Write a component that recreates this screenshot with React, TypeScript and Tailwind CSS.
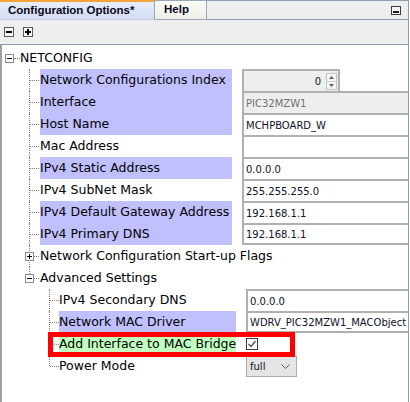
import React from "react";

const LF = "font-['DejaVu_Sans',sans-serif] text-[12.5px] text-black whitespace-nowrap";
const VF = "font-['DejaVu_Sans',sans-serif] text-[10px] text-[#101028] whitespace-nowrap";
const PURPLE = "bg-[#c0c0ff]";
const DOT = "border-dotted border-[#808080]";

function Expander({ open }: { open: boolean }) {
  return (
    <div className="relative w-[9px] h-[9px] border border-[#8c8c8c] bg-white">
      <div className="absolute left-[1px] top-[3px] w-[5px] h-px bg-black" />
      {!open && <div className="absolute left-[3px] top-[1px] w-px h-[5px] bg-black" />}
    </div>
  );
}

function L1Row({
  label,
  bg = "",
  last = false,
  children,
}: {
  label: string;
  bg?: string;
  last?: boolean;
  children?: React.ReactNode;
}) {
  return (
    <div className="relative h-[22px] flex">
      <div className={`absolute left-[27px] top-0 ${last ? "h-[11px]" : "h-[22px]"} border-l ${DOT}`} />
      <div className={`absolute left-[28px] top-[11px] w-[9px] border-t ${DOT}`} />
      <div className="w-[38px] shrink-0" />
      <div className={`w-[192px] shrink-0 flex items-center ${bg} ${LF}`}>{label}</div>
      <div className="w-[10px] shrink-0" />
      <div className="flex-1 flex">{children}</div>
    </div>
  );
}

function L2Row({
  label,
  bg = "",
  last = false,
  children,
}: {
  label: string;
  bg?: string;
  last?: boolean;
  children?: React.ReactNode;
}) {
  return (
    <div className="relative h-[22px] flex">
      <div className={`absolute left-[47px] top-0 ${last ? "h-[11px]" : "h-[22px]"} border-l ${DOT}`} />
      <div className={`absolute left-[48px] top-[11px] w-[9px] border-t ${DOT}`} />
      <div className="w-[57px] shrink-0" />
      <div className={`w-[177px] shrink-0 flex items-center ${bg} ${LF}`}>{label}</div>
      <div className="w-[10px] shrink-0" />
      <div className="flex-1 flex items-center">{children}</div>
    </div>
  );
}

function FolderRow({ label, open, last = false }: { label: string; open: boolean; last?: boolean }) {
  return (
    <div className="relative h-[22px] flex">
      <div className={`absolute left-[27px] top-0 ${last ? "h-[11px]" : "h-[22px]"} border-l ${DOT}`} />
      <div className="absolute left-[23px] top-[7px]">
        <Expander open={open} />
      </div>
      <div className={`absolute left-[32px] top-[11px] w-[5px] border-t ${DOT}`} />
      <div className="w-[38px] shrink-0" />
      <div className={`flex items-center ${LF}`}>{label}</div>
    </div>
  );
}

function Cell({
  children,
  bg = "bg-white",
  bottom = false,
  color = "",
}: {
  children?: React.ReactNode;
  bg?: string;
  bottom?: boolean;
  color?: string;
}) {
  return (
    <div
      className={`flex-1 h-full border-l-2 border-t-2 ${bottom ? "border-b-2" : ""} border-[#b0b0b0] flex items-center pl-[2px] ${bg} ${VF} ${color}`}
    >
      {children}
    </div>
  );
}

function ToolIcon({ plus }: { plus: boolean }) {
  return (
    <div className="relative w-[10px] h-[10px] border border-[#5a5a5a] bg-[#f6f6f6]">
      <div className="absolute left-[1px] top-[3px] w-[6px] h-[2px] bg-black" />
      {plus && <div className="absolute left-[3px] top-[1px] w-[2px] h-[6px] bg-black" />}
    </div>
  );
}

export default function App() {
  return (
    <div className="relative w-[410px] h-[402px] bg-white overflow-hidden">
      <div className="w-[409px] h-full flex flex-col border-r border-[#8d9cb4]">
        {/* Tab strip */}
        <div className="flex h-[20px] shrink-0 font-['Liberation_Sans',sans-serif] font-bold text-[11.5px] text-[#0a0a20]">
          <div className="w-[155px] h-full bg-linear-to-b from-[#e8edf9] to-[#d2dcf2] border-t-2 border-t-[#f4a43a] border-r border-r-[#9aa6bb] border-b border-b-[#c3cddf] flex items-center pl-[8px]">
            Configuration Options*
          </div>
          <div className="w-[52px] h-full bg-linear-to-b from-[#fbfbf8] to-[#efeee8] border-t border-r border-b border-[#9aa6bb] flex items-center pl-[9px]">
            Help
          </div>
          <div className="flex-1 h-full bg-[#eeeeee] border-t border-b border-[#8d9cb4] flex items-center justify-end pr-[7px]">
            <div className="relative w-[10px] h-[9px] border border-[#3a3a3a] bg-[#f4f4f4]">
              <div className="absolute left-[1px] top-[4px] w-[6px] h-[2px] bg-[#1a1a1a]" />
            </div>
          </div>
        </div>

        {/* Toolbar */}
        <div className="h-[25px] shrink-0 bg-[#eeeeee] border-b border-[#8d9cb4] flex items-center pl-[4px] gap-[9px]">
          <ToolIcon plus={false} />
          <ToolIcon plus={true} />
        </div>

        {/* Tree */}
        <div className="flex-1 border-l-2 border-[#a0a0a0] pt-[2px]">
          {/* NETCONFIG */}
          <div className="relative h-[22px] flex items-center">
            <div className="absolute left-[3px] top-[7px]">
              <Expander open={true} />
            </div>
            <div className={`absolute left-[12px] top-[11px] w-[6px] border-t ${DOT}`} />
            <div className="w-[18px] shrink-0" />
            <div className={LF}>NETCONFIG</div>
          </div>

          <L1Row label="Network Configurations Index" bg={PURPLE}>
            <div className="w-[98px] h-full border-l-2 border-t-2 border-r-2 border-[#b0b0b0] bg-[#eeeeee] flex items-center justify-end">
              <span className={`${VF} mr-[5px]`}>0</span>
              <div className="w-[11px] h-[17px] mr-[1px] border border-[#c4c4c4] bg-[#f4f4f4] flex flex-col">
                <div className="flex-1 flex items-center justify-center border-b border-[#d0d0d0]">
                  <svg width="5" height="3" viewBox="0 0 5 3">
                    <path d="M0 3 L2.5 0 L5 3 Z" fill="#606060" />
                  </svg>
                </div>
                <div className="flex-1 flex items-center justify-center">
                  <svg width="5" height="3" viewBox="0 0 5 3">
                    <path d="M0 0 L2.5 3 L5 0 Z" fill="#606060" />
                  </svg>
                </div>
              </div>
            </div>
          </L1Row>
          <L1Row label="Interface" bg={PURPLE}>
            <Cell bg="bg-[#eeeeee]" color="!text-[#707070]">PIC32MZW1</Cell>
          </L1Row>
          <L1Row label="Host Name" bg={PURPLE}>
            <Cell>MCHPBOARD_W</Cell>
          </L1Row>
          <L1Row label="Mac Address">
            <Cell />
          </L1Row>
          <L1Row label="IPv4 Static Address" bg={PURPLE}>
            <Cell>0.0.0.0</Cell>
          </L1Row>
          <L1Row label="IPv4 SubNet Mask">
            <Cell>255.255.255.0</Cell>
          </L1Row>
          <L1Row label="IPv4 Default Gateway Address" bg={PURPLE}>
            <Cell>192.168.1.1</Cell>
          </L1Row>
          <L1Row label="IPv4 Primary DNS" bg={PURPLE}>
            <Cell bottom>192.168.1.1</Cell>
          </L1Row>
          <FolderRow label="Network Configuration Start-up Flags" open={false} />
          <FolderRow label="Advanced Settings" open={true} last />

          <L2Row label="IPv4 Secondary DNS">
            <Cell>0.0.0.0</Cell>
          </L2Row>
          <L2Row label="Network MAC Driver" bg={PURPLE}>
            <Cell bottom>WDRV_PIC32MZW1_MACObject</Cell>
          </L2Row>
          <L2Row label="Add Interface to MAC Bridge" bg="bg-[#c0ffc0]">
            <div className="w-[12px] h-[12px] border border-[#3c3c3c] bg-white flex items-center justify-center">
              <svg width="10" height="10" viewBox="0 0 10 10">
                <path d="M1.5 5 L4 7.5 L8.5 2" stroke="#4a4a4a" strokeWidth="1.2" fill="none" />
              </svg>
            </div>
          </L2Row>
          <L2Row label="Power Mode" last>
            <div className="w-[51px] h-[21px] border border-[#acacac] bg-[#e5e5e5] flex items-center justify-between pl-[3px] pr-[6px]">
              <span className={VF}>full</span>
              <svg width="9" height="5" viewBox="0 0 9 5">
                <path d="M0.5 0.5 L4.5 4.5 L8.5 0.5" stroke="#606060" strokeWidth="1" fill="none" />
              </svg>
            </div>
          </L2Row>
        </div>
      </div>

      {/* Red annotation box */}
      <div className="absolute left-[48px] top-[332px] w-[247px] h-[25px] border-[5px] border-[#ff0000]" />
    </div>
  );
}
